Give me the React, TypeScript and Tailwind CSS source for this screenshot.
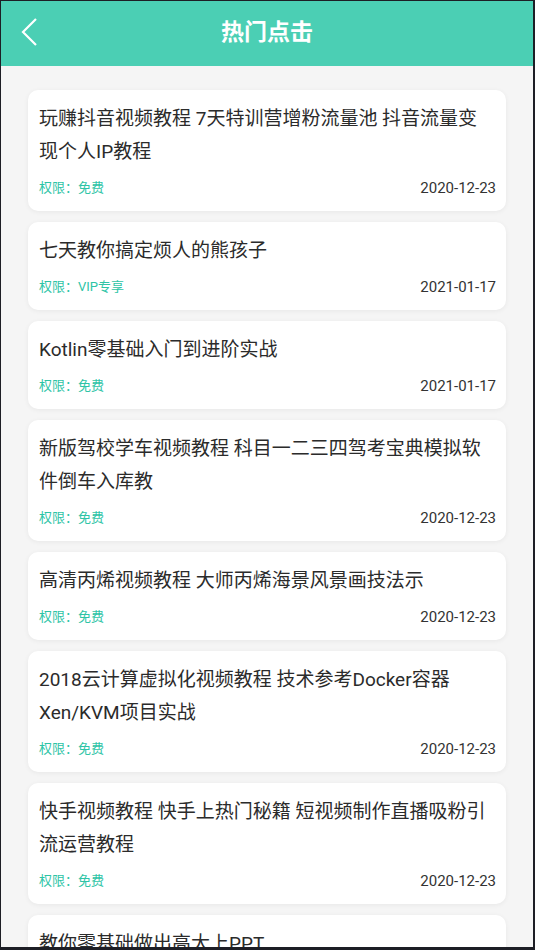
const items = [
  { title: "玩赚抖音视频教程 7天特训营增粉流量池 抖音流量变现个人IP教程", perm: "免费", date: "2020-12-23" },
  { title: "七天教你搞定烦人的熊孩子", perm: "VIP专享", date: "2021-01-17" },
  { title: "Kotlin零基础入门到进阶实战", perm: "免费", date: "2021-01-17" },
  { title: "新版驾校学车视频教程 科目一二三四驾考宝典模拟软件倒车入库教", perm: "免费", date: "2020-12-23" },
  { title: "高清丙烯视频教程 大师丙烯海景风景画技法示", perm: "免费", date: "2020-12-23" },
  { title: "2018云计算虚拟化视频教程 技术参考Docker容器Xen/KVM项目实战", perm: "免费", date: "2020-12-23" },
  { title: "快手视频教程 快手上热门秘籍 短视频制作直播吸粉引流运营教程", perm: "免费", date: "2020-12-23" },
  { title: "教你零基础做出高大上PPT", perm: "免费", date: "2020-12-23" },
];

const App = () => {
  return (
    <div
      className="h-[950px] w-[535px] overflow-hidden border-t border-l border-r-2 border-b-[3px] border-[#1d1e25] bg-[#f5f5f5]"
      style={{ fontFamily: "Roboto, 'Noto Sans CJK SC', sans-serif" }}
    >
      <header className="relative flex h-[65px] items-center justify-center bg-[#4bcfb4]">
        <svg
          className="absolute left-[18px] top-[15px]"
          width="22"
          height="32"
          viewBox="0 0 22 32"
          fill="none"
          stroke="white"
          strokeWidth="2.2"
        >
          <path d="M17 3 L4 16 L17 29" />
        </svg>
        <h1 className="text-[23px] font-bold text-white">热门点击</h1>
      </header>

      <div className="flex flex-col gap-[11px] px-[27px] pt-[24px]">
        {items.map((item) => (
          <div
            key={item.title}
            className="rounded-[10px] bg-white pt-[12px] pb-[13px] pl-[11px] pr-[10px] shadow-[0_1px_5px_rgba(0,0,0,0.06)]"
          >
            <div className="text-[19px] leading-[33px] text-[#2b2b2b]">{item.title}</div>
            <div className="mt-[10px] flex items-center justify-between leading-[20px]">
              <span className="text-[13px] text-[#2ec4a6]">权限：{item.perm}</span>
              <span className="text-[15px] text-[#333]">{item.date}</span>
            </div>
          </div>
        ))}
      </div>
    </div>
  );
};

export default App;
